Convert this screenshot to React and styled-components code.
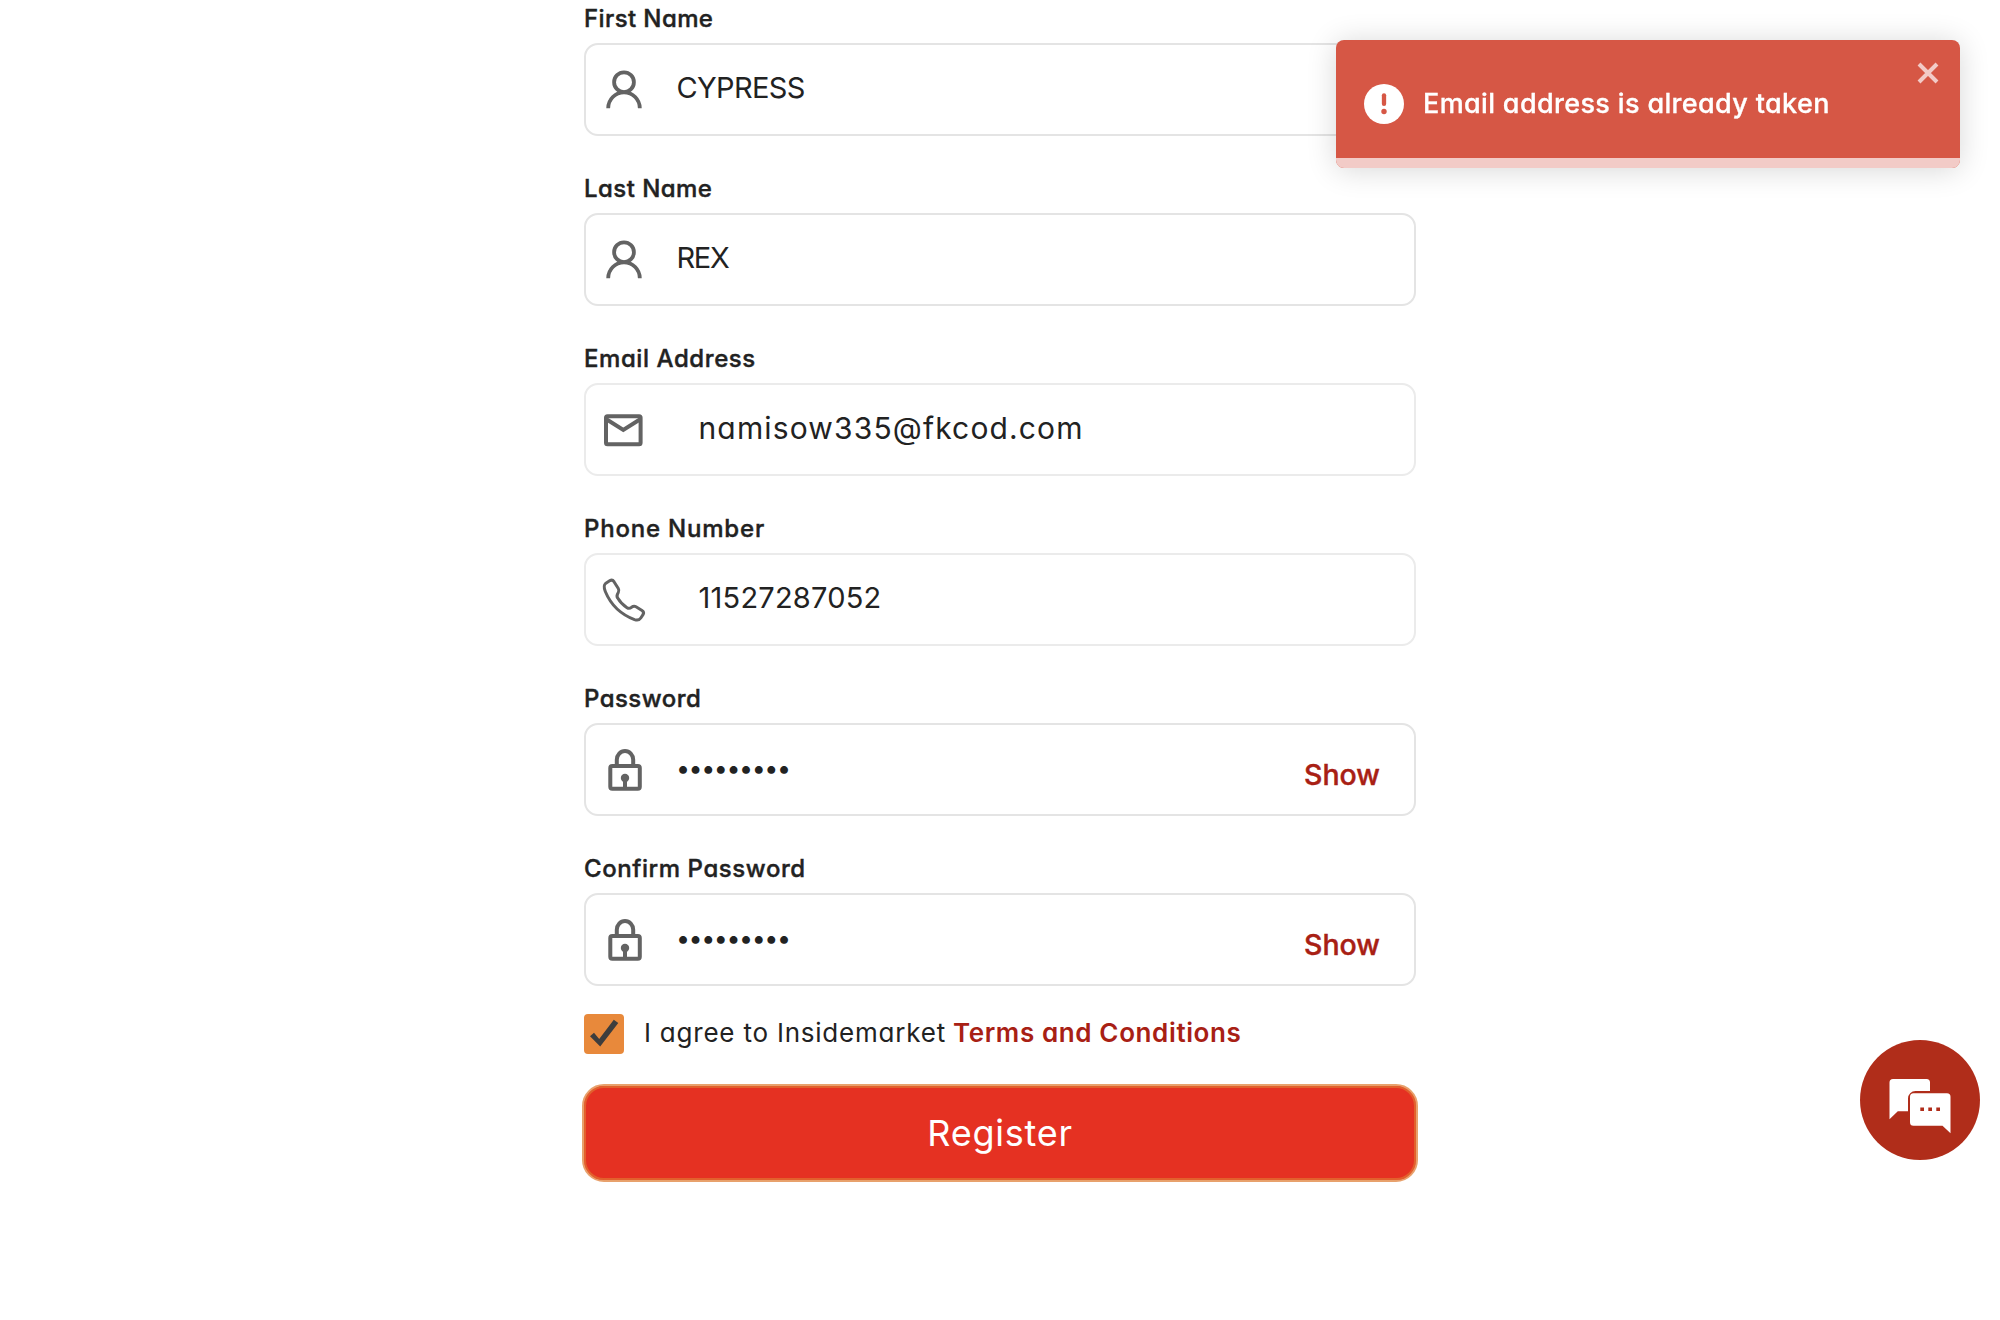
import React from "react";
import styled, { createGlobalStyle } from "styled-components";

const GlobalStyle = createGlobalStyle`
  *, *::before, *::after { box-sizing: border-box; }
  html, body { margin: 0; padding: 0; background: #fff; }
  body {
    height: 1320px;
    overflow: hidden;
    font-family: Inter, "Open Sans", sans-serif;
    font-feature-settings: "cv11" 1;
    color: #222;
  }
`;

const Page = styled.main`
  display: flex;
  justify-content: center;
  height: 1320px;
`;

const Form = styled.form`
  display: flex;
  flex-direction: column;
  width: 832px;
`;

const Field = styled.div`
  display: flex;
  flex-direction: column;
  gap: 6px;
  padding-top: 1px;
  margin-bottom: 34px;
`;

const Label = styled.label`
  height: 36px;
  line-height: 36px;
  font-size: 24px;
  font-weight: 500;
  letter-spacing: ${(p) => p.$track || 0}px;
  -webkit-text-stroke: 0.4px currentColor;
  white-space: nowrap;
`;

const InputBox = styled.div`
  display: flex;
  align-items: center;
  height: 93px;
  padding: 0 34px 0 12px;
  border: 2px solid ${(p) => (p.$soft ? "#ebebeb" : "#e4e4e4")};
  border-radius: 14px;
  background: #fff;
`;

const IconSlot = styled.span`
  display: flex;
  width: 52px;
  height: 52px;
  margin-right: ${(p) => p.$gap}px;
  color: #636363;
`;

const Value = styled.span`
  flex: 1;
  padding-bottom: 4px;
  line-height: 44px;
  font-size: ${(p) => p.$size || 29}px;
  letter-spacing: ${(p) => p.$track || 0}px;
  white-space: nowrap;
`;

const ShowButton = styled.button`
  padding: 10px 0 0;
  border: 0;
  background: none;
  font: 500 28.5px/44px Inter, sans-serif;
  -webkit-text-stroke: 0.4px currentColor;
  color: #a82014;
`;

const Agreement = styled.div`
  display: flex;
  align-items: center;
  height: 40px;
  margin-top: -6px;
  font-size: 26px;
  line-height: 36px;
  white-space: nowrap;
`;

const Checkbox = styled.span`
  display: flex;
  width: 40px;
  height: 40px;
  margin-right: 20px;
  border-radius: 4px;
  background: #e8893b;
`;

const AgreeText = styled.span`
  padding-bottom: 2px;
  letter-spacing: 0.78px;
`;

const TermsLink = styled.a`
  padding-bottom: 2px;
  margin-left: 7px;
  font-weight: 600;
  letter-spacing: 0.62px;
  color: #a82014;
`;

const RegisterButton = styled.button`
  height: 98px;
  margin: 30px -2px 0;
  padding: 0;
  border: 2px solid #e8a16c;
  border-radius: 22px;
  box-shadow: inset 0 0 0 2px #e2602c;
  background: #e53122;
  color: #fff;
  font: 400 36px/50px Inter, sans-serif;
  letter-spacing: 0.75px;
`;

const Toast = styled.aside`
  position: fixed;
  top: 40px;
  right: 40px;
  display: flex;
  flex-direction: column;
  width: 624px;
  height: 128px;
  border-radius: 8px;
  overflow: hidden;
  background: #d65745;
  box-shadow: 0 2px 30px rgba(0, 0, 0, 0.16);
  color: #fff;
`;

const ToastBody = styled.div`
  display: flex;
  flex: 1;
  align-items: flex-start;
  padding: 22px 21px 0 28px;
`;

const ToastIcon = styled.span`
  display: flex;
  margin: 22px 19px 0 0;
`;

const ToastText = styled.span`
  flex: 1;
  margin-top: 22px;
  line-height: 40px;
  font-size: 27px;
  font-weight: 500;
  letter-spacing: 0.35px;
  -webkit-text-stroke: 0.3px currentColor;
  white-space: nowrap;
`;

const CloseIcon = styled.svg`
  display: block;
`;

const ToastProgress = styled.div`
  height: 10px;
  background: #f2cbc7;
`;

const ChatButton = styled.button`
  position: fixed;
  top: 1040px;
  right: 20px;
  width: 120px;
  height: 120px;
  padding: 0;
  border: 0;
  border-radius: 50%;
  background: #b02d1a;
`;

const Svg = styled.svg`
  display: block;
  width: 100%;
  height: 100%;
`;

const UserIcon = () => (
  <Svg viewBox="0 0 52 52" fill="none" stroke="currentColor" strokeWidth="3.8">
    <circle cx="26" cy="18.2" r="9.9" />
    <path d="M10.2 44.2a15.8 15.8 0 0 1 31.6 0" />
  </Svg>
);

const MailIcon = () => (
  <Svg viewBox="0 0 52 52" fill="none" stroke="currentColor" strokeWidth="4">
    <rect x="7.2" y="12.3" width="34.6" height="28" rx="1.5" transform="translate(0.8 0)" />
    <path d="M8 15l17.3 11L42.600 15" />
  </Svg>
);

const PhoneIcon = () => (
  <Svg viewBox="-1 0 52 52" fill="none" stroke="currentColor" strokeWidth="3" strokeLinejoin="round">
    <path d="M6.5 9.5L11 6.6C12.5 5.7 14 6.2 15 7.7L19.3 14.5C20.2 16 20 17.2 19.3 18.5C18 20.5 17.3 22 18.5 23.8C21 28 24 31.2 28 33.7C29.6 34.7 31 34.5 32.5 33.3C34 32.2 35.5 31.9 37 32.8L43 36.5C44.8 37.6 45 39 44 40.7L41.8 44C40.5 46 38 46.4 35.5 45.6C22 40.5 11.5 30 6.3 17.5C5 14.2 4.8 11 6.5 9.5Z" />
  </Svg>
);

const LockIcon = () => (
  <Svg viewBox="0 0 52 52" fill="none" stroke="currentColor" strokeWidth="4">
    <rect x="12.3" y="22" width="29.5" height="22.8" rx="2" />
    <path d="M18.8 21V15.8a8.2 8.7 0 0 1 16.4 0V21" />
    <circle cx="27" cy="34" r="4.2" fill="currentColor" stroke="none" />
    <path d="M27 34v10" />
  </Svg>
);

const CheckIcon = () => (
  <Svg viewBox="0 0 40 40" fill="#3d3d3d">
    <path d="M6 22.2L10 18.8L15.2 25L29.800 5.800L34.300 9L16.200 32.500Z" />
  </Svg>
);

const AlertIcon = () => (
  <svg width="40" height="40" viewBox="0 0 40 40">
    <circle cx="20" cy="20" r="20" fill="#fff" />
    <path d="M20 11.3v8.600" stroke="#d65745" strokeWidth="4.3" strokeLinecap="round" />
    <circle cx="20" cy="27.5" r="2.7" fill="#d65745" />
  </svg>
);

const ChatIcon = () => (
  <Svg viewBox="0 0 120 120">
    <path fill="#fff" d="M33 39H66.5a3.5 3.5 0 0 1 3.5 3.5V51H55.5a7.5 7.5 0 0 0-7.5 7.5V71.3H37.8L29.5 79.3V42.5A3.5 3.5 0 0 1 33 39Z" />
    <path fill="#fff" d="M53.5 53.3H87a3.5 3.5 0 0 1 3.5 3.5V93.3L82.5 85.8H53.5A3.5 3.5 0 0 1 50 82.3V56.8a3.5 3.5 0 0 1 3.5-3.5Z" />
    <path fill="#b02d1a" d="M60.3 67.5h3.7v3.5h-3.7zM68.3 67.5h3.7v3.5h-3.7zM76.3 67.5h3.7v3.5h-3.7z" />
  </Svg>
);

const fields = [
  { label: "First Name", labelTrack: 0.4, value: "CYPRESS", track: -0.65, Icon: UserIcon, gap: 26.5 },
  { label: "Last Name", labelTrack: 0.45, value: "REX", track: -1.3, Icon: UserIcon, gap: 26.5 },
  { label: "Email Address", labelTrack: 0.57, value: "namisow335@fkcod.com", size: 30, track: 1.15, Icon: MailIcon, gap: 48.5, soft: true },
  { label: "Phone Number", labelTrack: 0.8, value: "11527287052", track: 0.22, Icon: PhoneIcon, gap: 48.5, soft: true },
  { label: "Password", labelTrack: 0.45, value: "•••••••••", size: 25, track: -1.45, Icon: LockIcon, gap: 26, secret: true },
  { label: "Confirm Password", labelTrack: 0.57, value: "•••••••••", size: 25, track: -1.45, Icon: LockIcon, gap: 26, secret: true },
];

export default function App() {
  return (
    <>
      <GlobalStyle />
      <Page>
        <Form>
          {fields.map(({ label, labelTrack, value, size, track, Icon, gap, soft, secret }) => (
            <Field key={label}>
              <Label $track={labelTrack}>{label}</Label>
              <InputBox $soft={soft}>
                <IconSlot $gap={gap}><Icon /></IconSlot>
                <Value $size={size} $track={track}>{value}</Value>
                {secret && <ShowButton type="button">Show</ShowButton>}
              </InputBox>
            </Field>
          ))}
          <Agreement>
            <Checkbox><CheckIcon /></Checkbox>
            <AgreeText>I agree to Insidemarket</AgreeText>
            <TermsLink>Terms and Conditions</TermsLink>
          </Agreement>
          <RegisterButton type="button">Register</RegisterButton>
        </Form>
      </Page>
      <Toast>
        <ToastBody>
          <ToastIcon><AlertIcon /></ToastIcon>
          <ToastText>Email address is already taken</ToastText>
          <CloseIcon width="22" height="22" viewBox="0 0 22 22" fill="none" stroke="#f2cbc7" strokeWidth="4">
            <path d="M2 2l18 18M20 2L2 20" />
          </CloseIcon>
        </ToastBody>
        <ToastProgress />
      </Toast>
      <ChatButton type="button"><ChatIcon /></ChatButton>
    </>
  );
}
